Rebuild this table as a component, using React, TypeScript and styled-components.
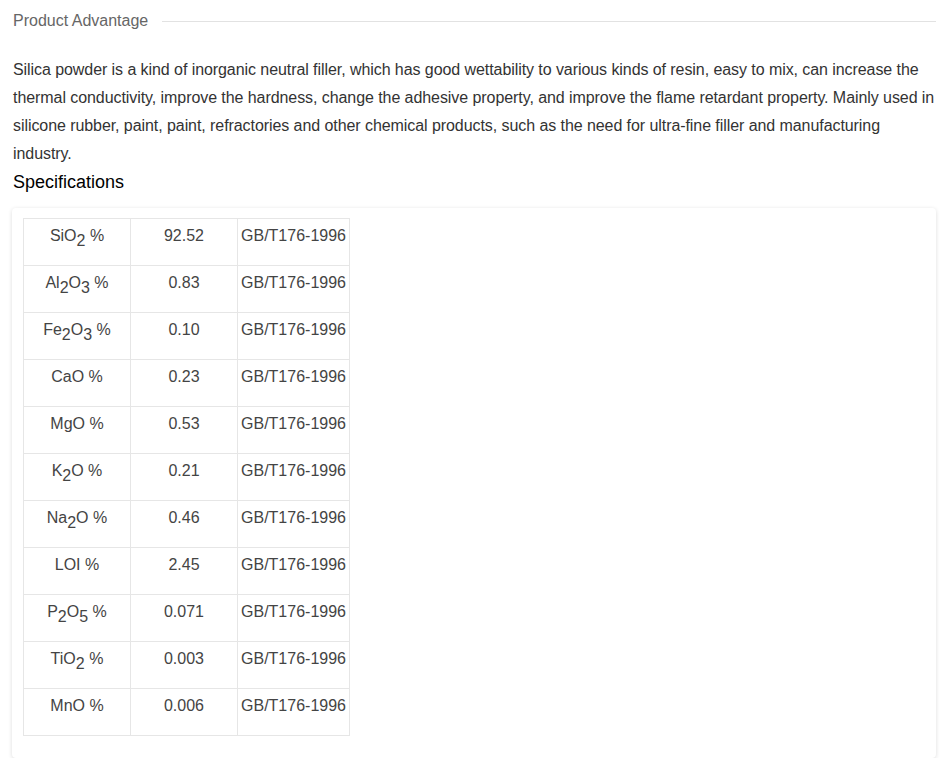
import React from 'react';
import styled, { createGlobalStyle } from 'styled-components';

const GlobalStyle = createGlobalStyle`
  body {
    margin: 0;
    background: #fff;
    font-family: "Liberation Sans", Arial, sans-serif;
  }
`;

const Page = styled.div`
  width: 924px;
  padding: 11px 12px 0;
`;

const SectionHead = styled.div`
  display: flex;
  align-items: center;
  gap: 14px;
  height: 20px;
  padding-left: 1px;
`;

const HeadTitle = styled.h2`
  margin: 0;
  font-size: 16px;
  font-weight: normal;
  color: #666;
  white-space: nowrap;
`;

const HeadLine = styled.div`
  flex: 1;
  height: 1px;
  background: #e2e2e2;
  margin-top: 1px;
`;

const Body = styled.p`
  margin: 25px 0 0;
  padding-left: 1px;
  font-size: 16px;
  line-height: 28px;
  letter-spacing: -0.07px;
  color: #333;
`;

const SubTitle = styled.h3`
  margin: 0;
  padding-left: 1px;
  font-size: 18px;
  font-weight: normal;
  line-height: 28px;
  color: #000;
`;

const Card = styled.div`
  margin-top: 12px;
  padding: 10px 10px 22px 11px;
  border-radius: 4px;
  background: #fff;
  box-shadow: 0 1px 4px rgba(0, 0, 0, 0.14);
`;

const SpecTable = styled.table`
  border-collapse: collapse;
  table-layout: fixed;
`;

const Cell = styled.td<{ $w: number }>`
  width: ${(p) => p.$w}px;
  height: 47px;
  box-sizing: border-box;
  border: 1px solid #e6e6e6;
  padding: 7px 0 0;
  vertical-align: top;
  text-align: center;
  font-size: 16px;
  line-height: 20px;
  color: #444;
  white-space: nowrap;

  sub {
    font-size: 16px;
    vertical-align: -5px;
    line-height: 0;
  }
`;

type Row = { name: React.ReactNode; value: string };

const rows: Row[] = [
  { name: <>SiO<sub>2</sub> %</>, value: '92.52' },
  { name: <>Al<sub>2</sub>O<sub>3</sub> %</>, value: '0.83' },
  { name: <>Fe<sub>2</sub>O<sub>3</sub> %</>, value: '0.10' },
  { name: <>CaO %</>, value: '0.23' },
  { name: <>MgO %</>, value: '0.53' },
  { name: <>K<sub>2</sub>O %</>, value: '0.21' },
  { name: <>Na<sub>2</sub>O %</>, value: '0.46' },
  { name: <>LOI %</>, value: '2.45' },
  { name: <>P<sub>2</sub>O<sub>5</sub> %</>, value: '0.071' },
  { name: <>TiO<sub>2</sub> %</>, value: '0.003' },
  { name: <>MnO %</>, value: '0.006' },
];

const App: React.FC = () => {
  return (
    <>
      <GlobalStyle />
      <Page>
        <SectionHead>
          <HeadTitle>Product Advantage</HeadTitle>
          <HeadLine />
        </SectionHead>
        <Body>
          Silica powder is a kind of inorganic neutral filler, which has good wettability to various kinds of resin, easy to mix, can increase the thermal conductivity, improve the hardness, change the adhesive property, and improve the flame retardant property. Mainly used in silicone rubber, paint, paint, refractories and other chemical products, such as the need for ultra-fine filler and manufacturing industry.
        </Body>
        <SubTitle>Specifications</SubTitle>
        <Card>
          <SpecTable>
            <tbody>
              {rows.map((r, i) => (
                <tr key={i}>
                  <Cell $w={107}>{r.name}</Cell>
                  <Cell $w={107}>{r.value}</Cell>
                  <Cell $w={112}>GB/T176-1996</Cell>
                </tr>
              ))}
            </tbody>
          </SpecTable>
        </Card>
      </Page>
    </>
  );
};

export default App;
